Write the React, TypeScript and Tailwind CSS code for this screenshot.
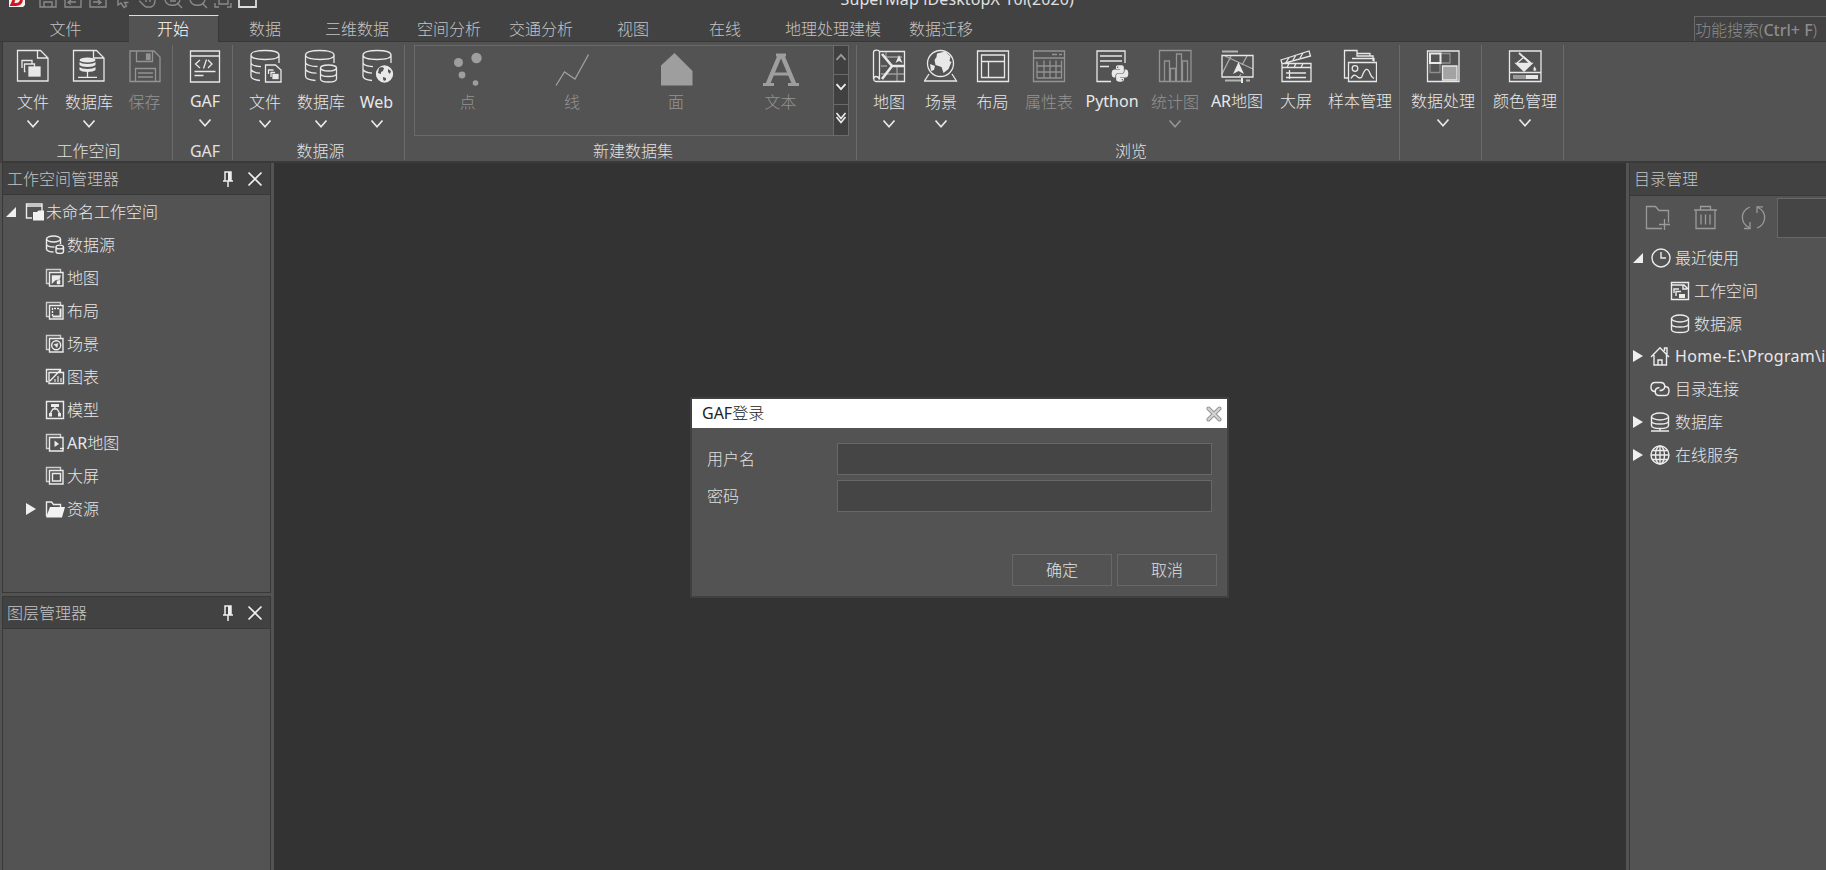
import type { ReactNode } from "react";
import clsx from "clsx";
import { FaPython } from "react-icons/fa";

const tabs = [
    { name: "文件", width: "w-[127px]" },
    { name: "开始", width: "w-[90px]", active: true },
    { name: "数据", width: "w-[92px]" },
    { name: "三维数据", width: "w-[92px]" },
    { name: "空间分析", width: "w-[92px]" },
    { name: "交通分析", width: "w-[92px]" },
    { name: "视图", width: "w-[92px]" },
    { name: "在线", width: "w-[92px]" },
    { name: "地理处理建模", width: "w-[124px]" },
    { name: "数据迁移", width: "w-[92px]" },
];

// Latin runs are set one weight heavier than the Chinese text around them
const Label = ({ text }: { text: string }) => (
    <>
        {text.split(/([\x20-\x7e]+)/).filter(Boolean).map((part, i) => (
            <span key={i} className={/^[\x20-\x7e]/.test(part) ? "font-normal" : "font-light"}>{part}</span>
        ))}
    </>
);

const Icon = ({ children, className }: { children: ReactNode; className?: string }) => (
    <svg
        viewBox="0 0 34 34"
        className={clsx("h-[34px] w-[34px] shrink-0", className)}
        fill="none"
        stroke="currentColor"
        strokeWidth="1.3"
    >
        {children}
    </svg>
);

const FileIcon = () => (
    <Icon>
        <path d="M21 1.5H1.5v30.5h30.5V9L24.5 1.5H21M21.5 1.5V9h10" />
        <path d="M6 19V11.5h10v3M9.5 22.5H8.5V15h10v3" />
        <rect x="13" y="18" width="11" height="9" fill="currentColor" />
    </Icon>
);

const DatabaseFileIcon = () => (
    <Icon>
        <path d="M21 1.5H1.5v30.5h30.5V9L24.5 1.5H21M21.5 1.5V9h10" />
        <ellipse cx="15.5" cy="11" rx="8" ry="2.4" fill="currentColor" stroke="none" />
        <path d="M7.500 13c2 2.500 14 2.500 16 0v3c-2 2.500-14 2.500-16 0zM7.500 18c2 2.500 14 2.500 16 0v3c-2 2.500-14 2.500-16 0z" fill="currentColor" stroke="none" />
        <path d="M15.500 23v5M6 28.300h19" />
    </Icon>
);

const SaveIcon = () => (
    <Icon>
        <path d="M2 2h24l6 6v24.500H2zM8.500 2v10.500h16V2M7.500 32V19.500h20V32M10 24h15M10 28h15" />
        <rect x="18.500" y="5" width="3.500" height="5.500" fill="currentColor" />
    </Icon>
);

const CodeIcon = () => (
    <Icon>
        <path d="M2.500 2h29v31h-29zM2.500 7h29M12 11l-4.500 4 4.500 4M18.500 10.500l-3 9M20 11l4 4-4 4M6.500 22.500h21M6.500 26.500h9" />
    </Icon>
);

const CylinderPath = () => (
    <path d="M3 6c0-3 6-4.500 14-4.500S31 3 31 6s-6 4.500-14 4.500S3 9 3 6v21c0 2.500 4 4 9 4.500M31 6v8M3 13.500c0 2 4 3.800 10 4.200M3 20c0 2 4 3.800 9 4.200" />
);

const SourceFileIcon = () => (
    <Icon>
        <CylinderPath />
        <path d="M17.500 16h10l5.500 5V33H17.500zM20.500 25v-4h5M23 28v-4.500h4" />
        <rect x="25" y="25.500" width="5" height="4" fill="currentColor" />
    </Icon>
);

const SourceDatabaseIcon = () => (
    <Icon>
        <path d="M1.500 6c0-3 6-4.500 14-4.500S30 3 30 6s-6 4.500-14 4.500S1.500 9 1.500 6v21c0 2.500 4 4 10 4.500M30 6v8M1.500 13.500c0 2 5 4 12 4M1.500 20c0 2 5 4 11 4.200" />
        <ellipse cx="24.500" cy="19" rx="8" ry="3" />
        <path d="M16.500 19v11c0 4 16 4 16 0V19M16.500 24.500c0 4 16 4 16 0" />
    </Icon>
);

const WebIcon = () => (
    <Icon>
        <CylinderPath />
        <circle cx="24.500" cy="25" r="9.500" fill="#535353" stroke="none" />
        <circle cx="24.500" cy="25" r="8" fill="currentColor" />
        <path d="M19 19l3-1 2 1-1 3-2 1v2l-3-1zM28 20l3 2-1 3-2-2zM23 28l3 1 0 2-2 1-1-2z" fill="#535353" stroke="none" />
    </Icon>
);

const MapIcon = () => (
    <Icon>
        <path d="M7.500 2.500h25v30H4c-3 0-3-5 0-5 2 0 3 1 3.500 3V3C7 .5 1.500.5 1.500 3.500V30" />
        <path d="M14 2v8M25 18v14M12 8h18M9 25h23M9 17h6" opacity=".5" />
        <path d="M10 5l10 12-10 13M20 17h12" strokeWidth="2.600" />
        <path d="M27 6l3.500 8-3.500-2-3.500 2z" fill="currentColor" stroke="none" />
    </Icon>
);

const SceneIcon = () => (
    <Icon>
        <circle cx="16.500" cy="14.500" r="13" />
        <path d="M5 25l-4.500 7h32L28 25" />
        <path d="M13 4.500l8-2 5.500 5-1 4.500 2 1-3 7-5 4-2-6-6-2-1-5 2-3zM6 15l5 2-1 4-3 1z" fill="currentColor" stroke="none" />
    </Icon>
);

const LayoutIcon = () => (
    <Icon>
        <path d="M1.500 2h31v30.500h-31zM5.500 6h23v22.500h-23zM5.500 12.500h23M12.500 12.500v16" />
    </Icon>
);

const TableIcon = () => (
    <Icon>
        <path d="M1.500 2h31v30.500h-31zM1.500 9h31M20 5.500h5M27 5.500h3M5 29V12.500M12 11.500V29M18 11.500V29M24 11.500V29M29.500 11.500V29M5 17h25M5 23h25M5 29h25" />
    </Icon>
);

const PythonIcon = () => (
    <Icon>
        <path d="M16 32.500H2V2h28v12M5 7h22M5 12h22M5 17.500h9" />
        <FaPython x="15.500" y="15" size={19} stroke="none" />
    </Icon>
);

const ChartIcon = () => (
    <Icon>
        <path d="M1.500 1.500h31.500v31H1.500zM6.500 32V12h5v20M12.500 32V19.500h5V32M18.500 32V5h5v27M24.500 32V12h5v20" />
    </Icon>
);

const ArMapIcon = () => (
    <Icon>
        <path d="M2 2.500h16M5 31.500h16M26 31.500h4" opacity=".65" strokeWidth="1.800" />
        <path d="M22 29v5" strokeWidth="2" />
        <path d="M2 6.500h31V28H2z" />
        <path d="M11 7L2 25M5 7l28 13M27 7l-5 9M21 25l-2 3" opacity=".6" />
        <path d="M18.500 13l5.500 12-5.500-3-5.500 3z" fill="currentColor" stroke="none" />
    </Icon>
);

const ClapperIcon = () => (
    <Icon>
        <path d="M3 14.500h29v18H3zM3 18.500h29M2 11l28-9 1.500 5L3 15zM10 8.500l-3 5M17 6l-3 5M24 4l-3 5M10 14.500l-2 4M17 14.500l-2 4M24 14.500l-2 4M7 24h20M7 28.500h20M10.500 21v9" />
    </Icon>
);

const SampleIcon = () => (
    <Icon>
        <path d="M6 29H1.500V1.500H14V7h16v5M14 4.500h13V7M9 9.500h22v3" />
        <path d="M5.500 13.500h28V32.500h-28z" />
        <circle cx="12" cy="19.500" r="2.800" />
        <path d="M8 29.500c2-4 4-4 6-2s4 2 5 0c3-9 6-9 8-3 1 3 2 4 4 5" />
    </Icon>
);

const DataProcessIcon = () => (
    <Icon>
        <path d="M1.500 2h31.500v30.500H1.500z" />
        <path d="M13 4.500h11v9.500H13M4 14v9.500h10V14" opacity=".4" />
        <path d="M4 4.500h10.500V14H4z" strokeWidth="2" />
        <path d="M16.500 17H31v14H16.500z" fill="#a3a3a3" />
    </Icon>
);

const ColorIcon = () => (
    <Icon>
        <path d="M1.500 2h31.500v30.500H1.500zM1.500 23.500h31" />
        <path d="M9 14l7-6 7 6" />
        <path d="M11 4l12 11" strokeWidth="1.800" />
        <path d="M8 14.500h16l-8 7.500z" fill="currentColor" />
        <path d="M26.500 17c6 7-5 7 0 0z" fill="currentColor" stroke="#535353" strokeWidth=".5" />
        <path d="M5 28h13" stroke="#9a9a9a" strokeWidth="4" />
        <path d="M18 28h12" strokeWidth="4" />
    </Icon>
);

const Chevron = () => (
    <svg viewBox="0 0 14 10" className="h-[10px] w-[14px]" fill="none" stroke="currentColor" strokeWidth="1.700">
        <path d="M1.500 1.500L7 7.800l5.500-6.300" />
    </svg>
);

type ToolProps = {
    label: string;
    icon: ReactNode;
    width: string;
    arrow?: boolean;
    disabled?: boolean;
    raised?: boolean;
};

const Tool = ({ label, icon, width, arrow, disabled, raised }: ToolProps) => (
    <div className={clsx("flex shrink-0 flex-col items-center pt-[7px]", width, disabled ? "text-[#939393]" : "text-[#e8e8e8]")}>
        {icon}
        <span className={clsx("leading-6 whitespace-nowrap", raised ? "mt-[6px]" : "mt-[7px]")}><Label text={label} /></span>
        {arrow && <span className="mt-[5px]"><Chevron /></span>}
    </div>
);

const Group = ({ label, className, children }: { label?: string; className: string; children: ReactNode }) => (
    <div className={clsx("flex h-[115px] shrink-0 flex-col border-r border-[#6a6a6a]", className)}>
        <div className="-mt-[3px] flex h-[98px] shrink-0">{children}</div>
        <div className="shrink-0 text-center leading-[22px] text-[#e2e2e2]">{label && <Label text={label} />}</div>
    </div>
);

const Gallery = () => (
    <div className="mt-[3px] flex h-[91px] w-[435px] border border-[#6a6a6a] text-[#939393]">
        <div className="flex w-[105px] flex-col items-center pt-[6px]">
            <svg viewBox="0 0 34 34" className="h-[34px] w-[34px]" fill="#9e9e9e">
                <circle cx="7.500" cy="10.500" r="4.500" />
                <circle cx="25.500" cy="6" r="5.200" />
                <circle cx="11" cy="23" r="3.400" />
                <circle cx="24.500" cy="31" r="2.800" />
            </svg>
            <span className="mt-[4px] leading-6">点</span>
        </div>
        <div className="flex w-[104px] flex-col items-center pt-[6px]">
            <svg viewBox="0 0 34 34" className="h-[34px] w-[34px]" fill="none" stroke="#9e9e9e" strokeWidth="1.300">
                <path d="M1 33.500L9.500 20l10.500 7L33.500 2.500" />
            </svg>
            <span className="mt-[4px] leading-6">线</span>
        </div>
        <div className="flex w-[104px] flex-col items-center pt-[6px]">
            <svg viewBox="0 0 34 34" className="h-[34px] w-[34px]" fill="#9e9e9e">
                <path d="M2 13.500L15.500 1 33.500 19v14.500H2z" />
            </svg>
            <span className="mt-[4px] leading-6">面</span>
        </div>
        <div className="flex w-[105px] flex-col items-center pt-[6px]">
            <svg viewBox="0 0 38 34" className="h-[34px] w-[38px]" fill="none" stroke="#9e9e9e">
                <path d="M6 31.500L18 3M20 3l12 28.500" strokeWidth="4.500" />
                <path d="M10 22h18M1 32.500h11M26 32.500h11M14 3h10" strokeWidth="3" />
            </svg>
            <span className="mt-[4px] leading-6">文本</span>
        </div>
        <div className="flex w-[15px] flex-col border-l border-[#6a6a6a] bg-[#404040]">
            <span className="flex h-[29px] items-center justify-center border-b border-[#6a6a6a] pb-[7px] text-[#999]">
                <svg viewBox="0 0 12 8" className="h-2 w-3" fill="none" stroke="currentColor" strokeWidth="1.800">
                    <path d="M1.500 6.800L6 1.800l4.500 5" />
                </svg>
            </span>
            <span className="flex h-[30px] items-center justify-center border-b border-[#6a6a6a] pb-[6px] text-[#eee]">
                <svg viewBox="0 0 12 8" className="h-2 w-3" fill="none" stroke="currentColor" strokeWidth="1.800">
                    <path d="M1.500 1.200L6 6.200l4.500-5" />
                </svg>
            </span>
            <span className="flex h-[30px] items-center justify-center pb-1 text-[#eee]">
                <svg viewBox="0 0 12 12" className="h-3 w-3" fill="none" stroke="currentColor" strokeWidth="1.600">
                    <path d="M1.500 1L6 6.500 10.500 1M1.500 5L6 10.500 10.500 5" />
                </svg>
            </span>
        </div>
    </div>
);

const TitleBar = () => (
    <div className="flex h-[15px] shrink-0 justify-between overflow-hidden">
        <svg viewBox="0 0 260 9" className="h-[9px] w-[260px]" fill="none" stroke="#8a8a8a" strokeWidth="1.400">
            <path d="M9 0h16v5l-2 2H9z" fill="#f2f2f2" stroke="none" />
            <path d="M14 0l-2 4.500h4c3 0 5-2 5.500-4.500" stroke="#d5121e" strokeWidth="3" />
            <path d="M40 0v7h16V0M44 7V2h8v5M65 0v7h16V0M69 2h7M71 0l-3 2.500 3 2M90 0v7h16V0M93 2h7M98 0l3 2.500-3 2" />
            <path d="M118 0v5l3-2 3 4.500 2.500-1.500-2-3.500h4M139 1c2 0 4 5 7 6h5c3-1 4-3 4-7M146 0v2M150 0v2" />
            <path d="M165 0c2 7 13 7 15 0M177 3l5 5M170 1h6M190 0c2 7 13 7 15 0M202 3l5 5M219 0v4h9V0M215 3v4h4M227 7h4V3" />
            <path d="M239 0v7h17V0" stroke="#dcdcdc" strokeWidth="1.800" />
        </svg>
        <span className="-mt-[13px] mr-[752px] leading-6 tracking-[0.12px] whitespace-nowrap text-[#e0e0e0]">
            <Label text="SuperMap iDesktopX 10i(2020)" />
        </span>
    </div>
);

const TabBar = () => (
    <div className="flex h-[27px] shrink-0 border-b border-[#383838] pl-[2px]">
        {tabs.map((tab) => (
            <div
                key={tab.name}
                className={clsx(
                    "shrink-0 text-center",
                    tab.width,
                    tab.active ? "-mb-px border-t border-r border-t-[#dedede] border-r-[#383838] bg-[#535353] pr-px leading-[27px] text-white" : "leading-[29px] text-[#c4c4c4]",
                )}
            >
                {tab.name}
            </div>
        ))}
        <div className="mt-px ml-auto w-[132px] border-t border-l border-[#686868] leading-[27px] whitespace-nowrap text-[#8c8c8c]">
            功能搜索(<span className="font-medium">Ctrl+ F</span>)
        </div>
    </div>
);

const Ribbon = () => (
    <div className="ml-[2px] flex h-[121px] shrink-0 border-b-2 border-l border-b-[#3a3a3a] border-l-[#383838] bg-[#535353] pt-[3px]">
        <Group label="工作空间" className="w-[170px] pl-[2px]">
            <Tool label="文件" icon={<FileIcon />} width="w-[56px]" arrow />
            <Tool label="数据库" icon={<DatabaseFileIcon />} width="w-[56px]" arrow />
            <Tool label="保存" icon={<SaveIcon />} width="w-[55px]" disabled />
        </Group>
        <Group label="GAF" className="w-[60px] pl-[5px]">
            <Tool label="GAF" icon={<CodeIcon />} width="w-[54px]" arrow raised />
        </Group>
        <Group label="数据源" className="w-[172px] pl-1">
            <Tool label="文件" icon={<SourceFileIcon />} width="w-[56px]" arrow />
            <Tool label="数据库" icon={<SourceDatabaseIcon />} width="w-[56px]" arrow />
            <Tool label="Web" icon={<WebIcon />} width="w-[55px]" arrow />
        </Group>
        <Group label="新建数据集" className="w-[452px] pr-1 pl-[9px]">
            <Gallery />
        </Group>
        <Group label="浏览" className="w-[543px] pl-[6px]">
            <Tool label="地图" icon={<MapIcon />} width="w-[52px]" arrow />
            <Tool label="场景" icon={<SceneIcon />} width="w-[52px]" arrow />
            <Tool label="布局" icon={<LayoutIcon />} width="w-[51px]" />
            <Tool label="属性表" icon={<TableIcon />} width="w-[62px]" disabled />
            <Tool label="Python" icon={<PythonIcon />} width="w-[64px]" raised />
            <Tool label="统计图" icon={<ChartIcon />} width="w-[62px]" arrow disabled />
            <Tool label="AR地图" icon={<ArMapIcon />} width="w-[62px]" raised />
            <Tool label="大屏" icon={<ClapperIcon />} width="w-[56px]" raised />
            <Tool label="样本管理" icon={<SampleIcon />} width="w-[72px]" raised />
        </Group>
        <Group className="w-[82px] pl-[5px]">
            <Tool label="数据处理" icon={<DataProcessIcon />} width="w-[76px]" arrow raised />
        </Group>
        <Group className="w-[82px] pl-[5px]">
            <Tool label="颜色管理" icon={<ColorIcon />} width="w-[76px]" arrow raised />
        </Group>
    </div>
);

const PanelHeader = ({ title }: { title: string }) => (
    <div className="flex h-8 shrink-0 items-center border-b border-[#383838] bg-[#424242] pl-1 text-[#c4c4c4]">
        <span>{title}</span>
        <svg viewBox="0 0 10 16" className="mr-[14px] ml-auto h-4 w-[10px]" fill="none" stroke="#eee" strokeWidth="1.500">
            <path d="M2 1h6v9H2zM0 10h10M5 10v6" />
            <path d="M6.500 1v9" strokeWidth="3" />
        </svg>
        <svg viewBox="0 0 16 16" className="mr-[7px] h-4 w-4" fill="none" stroke="#f0f0f0" strokeWidth="1.700">
            <path d="M1.500 1.500l13 13M14.500 1.500l-13 13" />
        </svg>
    </div>
);

const SmallIcon = ({ children }: { children: ReactNode }) => (
    <svg viewBox="0 0 20 20" className="h-5 w-5 shrink-0" fill="none" stroke="#ececec" strokeWidth="1.400">
        {children}
    </svg>
);

const Stacked = ({ children }: { children: ReactNode }) => (
    <SmallIcon>
        <path d="M4 15.500H1.500V1.500h14V4" opacity=".8" />
        <path d="M4.500 4.500h13.500V18H4.500z" />
        {children}
    </SmallIcon>
);

const Arrow = ({ open }: { open?: boolean }) => (
    <svg viewBox="0 0 10 12" className="h-3 w-[10px] shrink-0" fill="#efefef">
        <path d={open ? "M10 1v10H0z" : "M0 0l10 6-10 6z"} />
    </svg>
);

const workspaceItems = [
    {
        name: "数据源",
        icon: (
            <SmallIcon>
                <ellipse cx="8.500" cy="4" rx="7" ry="3" />
                <path d="M1.500 4v10c0 1.500 3 3 7 3M15.500 4v5M1.500 9c0 2 4 3 8 3M11 12c0-2.500 7.500-2.500 7.500 0s-7.500 2.500-7.500 0v4.500c0 2.500 7.500 2.500 7.500 0V12" />
            </SmallIcon>
        ),
    },
    { name: "地图", icon: <Stacked><path d="M7 15.500V7.500h8.500l-1 4-4 .5zM12 16v-3l3-1v4z" fill="#ececec" strokeWidth=".5" /></Stacked> },
    { name: "布局", icon: <Stacked><path d="M7.500 15V7.500H15" strokeDasharray="2 1" /><path d="M7.500 15.500H15.500V7.500" strokeWidth="2" /></Stacked> },
    { name: "场景", icon: <Stacked><circle cx="11.200" cy="11.200" r="4.500" /><path d="M9 10.500l4-1-1 4z" fill="#ececec" strokeWidth=".5" /></Stacked> },
    {
        name: "图表",
        icon: (
            <SmallIcon>
                <path d="M3 14.500H1.500V2.500h14V5M4 16.500V5.500h14.500v11zM5 14L15.500 3" />
                <path d="M10 15v-3M13 15V9M16 15v-4" stroke="#aaa" strokeWidth="2" />
            </SmallIcon>
        ),
    },
    {
        name: "模型",
        icon: (
            <SmallIcon>
                <path d="M1.500 1.500H18.500V18.500H1.500z" />
                <path d="M6 4h8v3H6zM4 13h3v3.500H4zM13 13h3v3.500h-3z" fill="#ececec" stroke="none" />
                <path d="M10 7v2M5.500 13L8 9h4l2.500 4" />
            </SmallIcon>
        ),
    },
    { name: "AR地图", icon: <Stacked><path d="M9.500 7.500l4.500 3.500-4.500 3z" fill="#ececec" stroke="none" /><path d="M15 15.500h4" /></Stacked> },
    { name: "大屏", icon: <Stacked><path d="M7.500 7.500H15.500V15H7.500z" /></Stacked> },
];

const WorkspaceTree = () => (
    <div className="flex flex-col text-[#e8e8e8]">
        <div className="flex h-[33px] items-center pl-[3px]">
            <Arrow open />
            <span className="mr-px ml-[9px]">
                <SmallIcon>
                    <path d="M7 16H1.500V2H17v7M1.500 4H17" />
                    <path d="M8 10h4l1.500-1.500H19V18.500H8z" fill="#f2f2f2" stroke="none" />
                </SmallIcon>
            </span>
            <span>未命名工作空间</span>
        </div>
        {workspaceItems.map((item) => (
            <div key={item.name} className="flex h-[33px] items-center gap-[2px] pl-[42px]">
                {item.icon}
                <span><Label text={item.name} /></span>
            </div>
        ))}
        <div className="flex h-[33px] items-center pl-[23px]">
            <Arrow />
            <span className="mr-[2px] ml-[9px]">
                <SmallIcon>
                    <path d="M1.500 17V3h5l2 2.500h7V8" />
                    <path d="M1 18.500L5 8h15l-3 10.500z" fill="#f2f2f2" stroke="none" />
                </SmallIcon>
            </span>
            <span>资源</span>
        </div>
    </div>
);

const HomeIcon = () => (
    <SmallIcon>
        <path d="M1 11L10 1.800 19 11M4 9v10h12.500V9M14.500 5V2H17v6M8 19v-5h4v5" />
    </SmallIcon>
);

const LinkIcon = () => (
    <SmallIcon>
        <path d="M6 12.500H4.500C-.5 12 0 3.500 5 3.500h6c4.500 0 5 6 1.500 7.500-1 .5-3 .5-3 .5M14 7.500h1.500c5 .5 4.500 9-.5 9H9c-4.500 0-5-6-1.500-7.500 1-.5 2-.5 2-.5" />
    </SmallIcon>
);

const DatabaseIcon = () => (
    <SmallIcon>
        <ellipse cx="10" cy="4.500" rx="8.500" ry="3.500" />
        <path d="M1.500 4.500v9c0 4 17 4 17 0v-9M1.500 9c0 4 17 4 17 0M10 16v3M1 19h18" />
    </SmallIcon>
);

const GlobeIcon = () => (
    <SmallIcon>
        <circle cx="10" cy="10" r="9" />
        <ellipse cx="10" cy="10" rx="4.500" ry="9" />
        <path d="M10 1v18M1 10h18M2.500 5.500h15M2.500 14.500h15" />
    </SmallIcon>
);

const catalogItems = [
    { name: "Home-E:\\Program\\i", icon: <HomeIcon />, arrow: true, latin: true },
    { name: "目录连接", icon: <LinkIcon /> },
    { name: "数据库", icon: <DatabaseIcon />, arrow: true },
    { name: "在线服务", icon: <GlobeIcon />, arrow: true },
];

const Catalog = () => (
    <div className="flex w-[197px] shrink-0 flex-col overflow-hidden border-l border-[#383838] bg-[#535353] whitespace-nowrap text-[#e8e8e8]">
        <div className="flex h-[33px] shrink-0 items-center border-b border-[#383838] bg-[#424242] pl-1 text-[#c4c4c4]">目录管理</div>
        <div className="flex h-[45px] shrink-0 items-start pt-[2px]">
            <div className="flex items-center gap-6 pt-[7px] pl-[15px] text-[#9a9a9a]">
                <svg viewBox="0 0 25 25" className="h-[25px] w-[25px]" fill="none" stroke="currentColor" strokeWidth="1.300">
                    <path d="M17 23.500H1.500V1.500h9l3.500 4h9.500v12M19.500 14v11M14 19.500h11" />
                </svg>
                <svg viewBox="0 0 25 25" className="-ml-px h-[25px] w-[25px]" fill="none" stroke="currentColor" strokeWidth="1.300">
                    <path d="M1 5h23M3 5v18.500h19V5M7.500 5V1.500h10V5M8 9.500v10M12.500 9.500v10M17 9.500v10" />
                </svg>
                <svg viewBox="0 0 25 25" className="-ml-px h-[25px] w-[25px]" fill="none" stroke="currentColor" strokeWidth="1.300">
                    <path d="M9 2C-1 6-1 18 8 22.500M9 17v6.500H3M16 23c10-4 10-16 1-20.500M16 8V1.800h6" />
                </svg>
            </div>
            <div className="ml-auto h-10 w-[49px] border border-r-0 border-[#686868] bg-[#454545]" />
        </div>
        <div className="flex h-[33px] shrink-0 items-center pl-[3px]">
            <Arrow open />
            <span className="mr-[4px] ml-[8px]">
                <SmallIcon>
                    <circle cx="10" cy="10" r="9" />
                    <path d="M10 4v6h5" />
                </SmallIcon>
            </span>
            <span>最近使用</span>
        </div>
        <div className="flex h-[33px] shrink-0 items-center gap-1 pl-10">
            <SmallIcon>
                <path d="M1.500 1.500H18.500V18.500H1.500zM1.500 4H14l4 4M4 12V8h5M6 15v-4.500h5M13 4v4h4" />
                <path d="M9 13h6v4H9z" fill="#ececec" stroke="none" />
            </SmallIcon>
            <span>工作空间</span>
        </div>
        <div className="flex h-[33px] shrink-0 items-center gap-1 pl-10">
            <SmallIcon>
                <ellipse cx="10" cy="4.500" rx="8.500" ry="3.500" />
                <path d="M1.500 4.500v11c0 4 17 4 17 0v-11M1.500 10c0 4 17 4 17 0" />
            </SmallIcon>
            <span>数据源</span>
        </div>
        {catalogItems.map((item) => (
            <div key={item.name} className="flex h-[33px] shrink-0 items-center pb-px pl-[3px]">
                <span className="w-[10px]">{item.arrow && <Arrow />}</span>
                <span className="mr-[5px] ml-[7px]">{item.icon}</span>
                <span className={clsx(item.latin && "tracking-[0.3px]")}><Label text={item.name} /></span>
            </div>
        ))}
    </div>
);

const LoginDialog = () => (
    <div className="mt-[234px] ml-[416px] flex h-[201px] w-[539px] shrink-0 flex-col border-2 border-[#404040] bg-[#535353] text-[#e0e0e0]">
        <div className="flex h-[29px] items-center justify-between bg-white pr-[5px] pl-[10px] text-[#222]">
            <span className="-mt-px"><Label text="GAF登录" /></span>
            <svg viewBox="0 0 16 16" className="h-4 w-4" fill="none" strokeLinecap="round">
                <path d="M2.500 2.500l11 11M13.500 2.500l-11 11" stroke="#8e8e8e" strokeWidth="4" />
                <path d="M2.500 2.500l11 11M13.500 2.500l-11 11" stroke="#d2d2d2" strokeWidth="2.400" />
            </svg>
        </div>
        <div className="flex flex-col gap-[5px] pt-[15px] pl-[15px]">
            <label className="flex h-8 items-center">
                <span className="w-[130px]">用户名</span>
                <input className="h-8 w-[375px] border border-[#686868] bg-[#454545]" />
            </label>
            <label className="flex h-8 items-center">
                <span className="w-[130px]">密码</span>
                <input type="password" className="h-8 w-[375px] border border-[#686868] bg-[#454545]" />
            </label>
        </div>
        <div className="mt-[42px] flex justify-end gap-[5px] pr-[10px]">
            <button className="h-8 w-[100px] border border-[#686868]">确定</button>
            <button className="h-8 w-[100px] border border-[#686868]">取消</button>
        </div>
    </div>
);

const App = () => {
    return (
        <div className="flex h-[870px] w-[1826px] flex-col overflow-hidden bg-[#424242] font-['Noto_Sans','Noto_Sans_CJK_SC',sans-serif] text-[16px] leading-6 font-light">
            <TitleBar />
            <TabBar />
            <Ribbon />
            <div className="flex min-h-0 flex-1 bg-[#535353]">
                <div className="flex w-[274px] shrink-0 flex-col gap-[3px] pr-[3px] pl-[2px]">
                    <div className="flex h-[430px] shrink-0 flex-col border-x border-b border-[#383838]">
                        <PanelHeader title="工作空间管理器" />
                        <WorkspaceTree />
                    </div>
                    <div className="flex flex-1 flex-col border-x border-t border-[#383838]">
                        <PanelHeader title="图层管理器" />
                    </div>
                </div>
                <div className="flex w-[1352px] shrink-0 bg-[#333333]">
                    <LoginDialog />
                </div>
                <div className="w-[3px] shrink-0" />
                <Catalog />
            </div>
        </div>
    );
};

export default App;
